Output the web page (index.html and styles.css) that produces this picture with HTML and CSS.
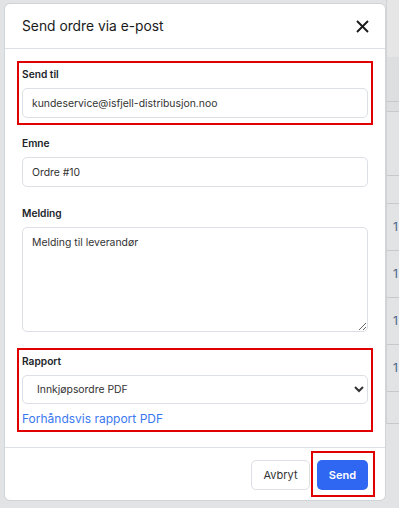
FILE: index.html
```html
<!DOCTYPE html>
<html lang="no">
<head>
    <meta charset="UTF-8">
    <meta name="viewport" content="width=device-width, initial-scale=1.0">
    <title>Send ordre via e-post</title>
    <link rel="stylesheet" href="styles.css">
</head>
<body>
    <div class="backdrop">
        <div class="side-table">
            <div class="side-row r1"></div>
            <div class="side-row r2"></div>
            <div class="side-row r3"></div>
            <div class="side-row r4"></div>
            <div class="side-row"></div>
            <div class="side-row num">1</div>
            <div class="side-row num">1</div>
            <div class="side-row num">1</div>
            <div class="side-row num">1</div>
            <div class="side-row r5"></div>
        </div>
    </div>

    <div class="modal">
        <div class="modal-header">
            <h2>Send ordre via e-post</h2>
            <button class="close-btn" type="button" aria-label="Lukk">
                <svg width="13" height="13" viewBox="0 0 13 13">
                    <path d="M1 1 L12 12 M12 1 L1 12" stroke="#1a1a1a" stroke-width="1.9" fill="none"/>
                </svg>
            </button>
        </div>

        <form class="modal-body">
            <div class="form-group highlight">
                <label for="to">Send til</label>
                <input type="text" id="to" value="kundeservice@isfjell-distribusjon.noo">
            </div>
            <div class="form-group">
                <label for="subject">Emne</label>
                <input type="text" id="subject" value="Ordre #10">
            </div>
            <div class="form-group">
                <label for="message">Melding</label>
                <textarea id="message">Melding til leverandør</textarea>
            </div>
            <div class="form-group highlight last">
                <label for="report">Rapport</label>
                <select id="report">
                    <option>Innkjøpsordre PDF</option>
                </select>
                <a href="#" class="preview-link">Forhåndsvis rapport PDF</a>
            </div>
        </form>

        <div class="modal-footer">
            <button type="button" class="btn btn-cancel">Avbryt</button>
            <div class="send-frame">
                <button type="button" class="btn btn-send">Send</button>
            </div>
        </div>
    </div>
</body>
</html>
```

FILE: styles.css
```css
:root {
    --primary-color: #2f66f2;
    --link-color: #3a78f0;
    --border-color: #dcdfe4;
    --text-color: #212529;
    --highlight: #e00000;
}

* {
    box-sizing: border-box;
}

body {
    margin: 0;
    width: 399px;
    height: 508px;
    overflow: hidden;
    background-color: #e2e3e5;
    font-family: 'Inter', sans-serif;
    color: var(--text-color);
    position: relative;
}

/* page behind the dialog */
.backdrop {
    position: absolute;
    inset: 0;
}

.side-table {
    position: absolute;
    left: 386px;
    top: 0;
    width: 13px;
    border-left: 1px solid #d0d4d8;
}

.side-row {
    height: 47px;
    border-bottom: 1px solid #c6cacf;
    font-size: 12px;
    line-height: 46px;
    padding-left: 6px;
    color: #4b6584;
}

.side-row.r1 {
    height: 57px;
    background-color: #e6e6e7;
    border-bottom: none;
}

.side-row.r2 {
    height: 45px;
    background-color: #dcdee0;
}

.side-row.r3 {
    height: 10px;
    background-color: #dcdee0;
}

.side-row.r4 {
    height: 64px;
}

.side-row:nth-child(5) {
    height: 28px;
}

.side-row.r5 {
    height: 32px;
}

.modal {
    position: relative;
    margin: 3px 0 0 4px;
    width: 382px;
    height: 498px;
    background-color: #ffffff;
    border-radius: 6px;
    border: 1px solid #cfd4d9;
    display: flex;
    flex-direction: column;
}

.modal-header {
    display: flex;
    align-items: center;
    justify-content: space-between;
    height: 45px;
    padding: 0 16px 0 17px;
    border-bottom: 1px solid var(--border-color);
}

h2 {
    margin: 0;
    font-size: 13.8px;
    font-weight: 400;
    color: #1a1a1a;
}

.close-btn {
    background: none;
    border: none;
    padding: 0;
    width: 13px;
    height: 13px;
    display: flex;
    cursor: pointer;
}

.modal-body {
    flex: 1;
    padding: 17px 17px 0 17px;
}

.form-group {
    margin-bottom: 18px;
}

.form-group.highlight {
    outline: 2px solid var(--highlight);
    outline-offset: 3px;
    padding-bottom: 2px;
    margin-bottom: 15px;
}

.form-group.last {
    margin-top: 21px;
    margin-bottom: 0;
    padding-bottom: 0;
}

label {
    display: block;
    font-size: 10.2px;
    font-weight: 600;
    line-height: 16px;
    margin-bottom: 6px;
}

input,
textarea,
select {
    width: 100%;
    height: 30px;
    padding: 0 9px;
    border: 1px solid var(--border-color);
    border-radius: 5px;
    font-family: 'Inter', sans-serif;
    font-size: 10.4px;
    color: #333;
    background-color: #fff;
}

textarea {
    display: block;
    height: 105px;
    padding: 8px 9px;
    resize: vertical;
}

select {
    height: 29px;
    padding: 0 10px;
}

.preview-link {
    display: block;
    margin-top: 6px;
    font-size: 12px;
    line-height: 17px;
    color: var(--link-color);
    text-decoration: none;
}

.modal-footer {
    display: flex;
    justify-content: flex-end;
    align-items: flex-start;
    gap: 7px;
    padding: 12px 17px 0 17px;
    height: 53px;
    border-top: 1px solid var(--border-color);
}

.btn {
    height: 30px;
    padding: 0;
    border-radius: 5px;
    font-family: 'Inter', sans-serif;
    font-size: 11px;
    cursor: pointer;
}

.btn-cancel {
    width: 59px;
    background: #fff;
    border: 1px solid var(--border-color);
    color: #333;
}

.send-frame {
    display: flex;
    border: 2px solid var(--highlight);
    padding: 7px 5px 5px 4px;
    margin: -9px -7px 0 -6px;
}

.btn-send {
    width: 51px;
    background-color: var(--primary-color);
    border: none;
    color: #fff;
    font-weight: 600;
}
```
